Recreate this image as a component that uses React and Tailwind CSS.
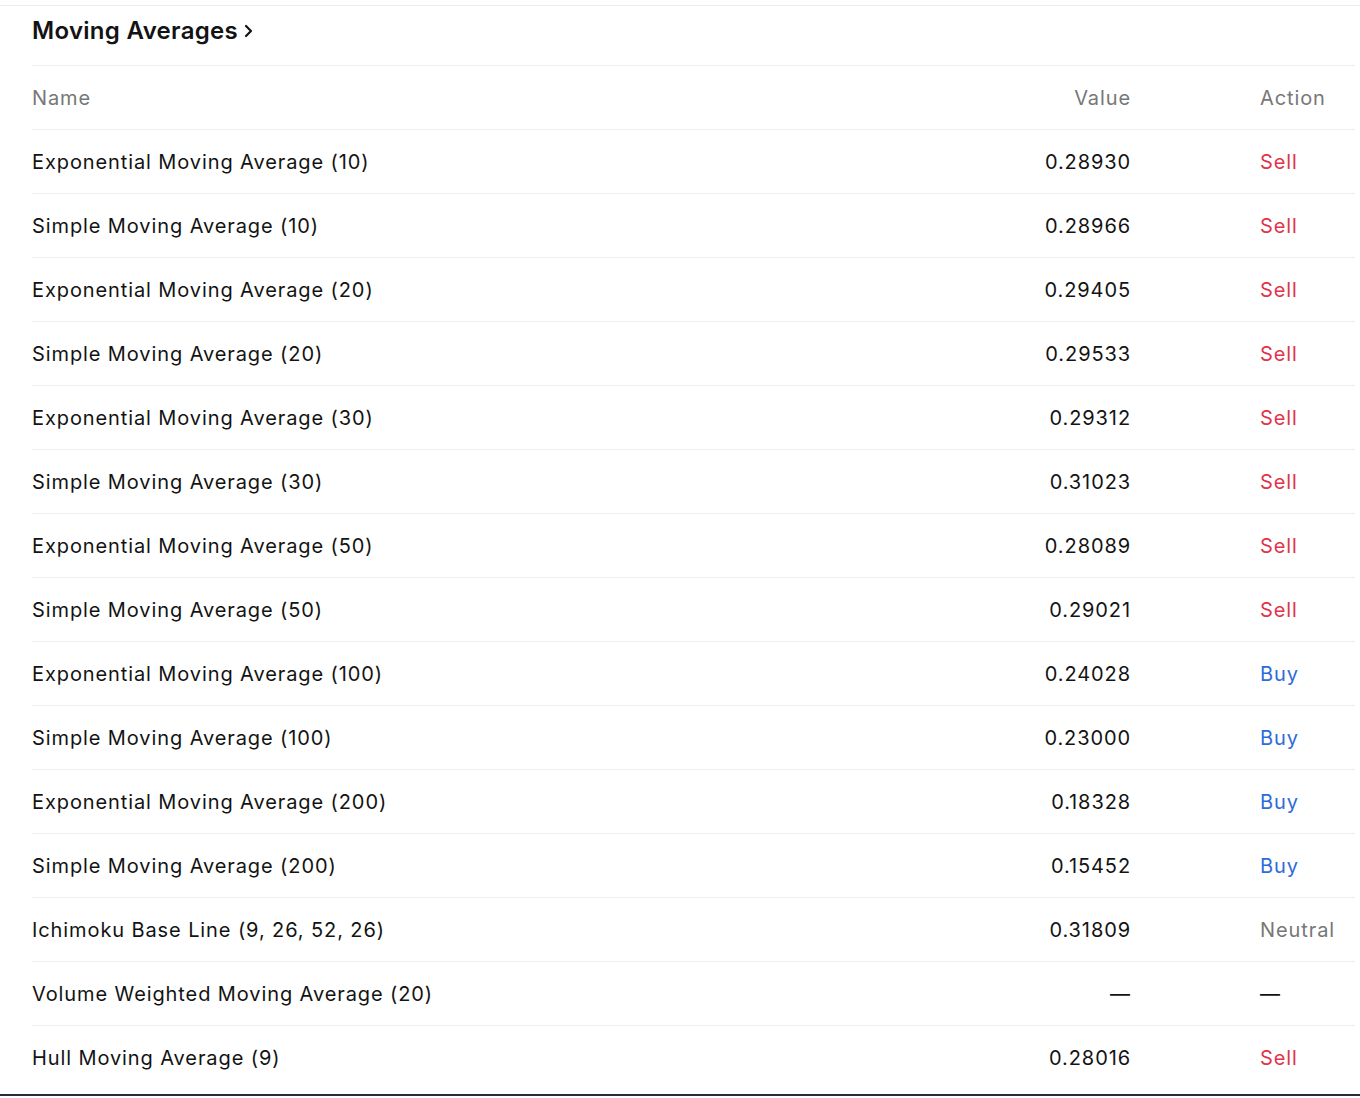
const rows = [
  ["Exponential Moving Average (10)", "0.28930", "Sell"],
  ["Simple Moving Average (10)", "0.28966", "Sell"],
  ["Exponential Moving Average (20)", "0.29405", "Sell"],
  ["Simple Moving Average (20)", "0.29533", "Sell"],
  ["Exponential Moving Average (30)", "0.29312", "Sell"],
  ["Simple Moving Average (30)", "0.31023", "Sell"],
  ["Exponential Moving Average (50)", "0.28089", "Sell"],
  ["Simple Moving Average (50)", "0.29021", "Sell"],
  ["Exponential Moving Average (100)", "0.24028", "Buy"],
  ["Simple Moving Average (100)", "0.23000", "Buy"],
  ["Exponential Moving Average (200)", "0.18328", "Buy"],
  ["Simple Moving Average (200)", "0.15452", "Buy"],
  ["Ichimoku Base Line (9, 26, 52, 26)", "0.31809", "Neutral"],
  ["Volume Weighted Moving Average (20)", "—", "—"],
  ["Hull Moving Average (9)", "0.28016", "Sell"],
];
const color = (a) =>
  a === "Sell" ? "text-[#e0344b]" : a === "Buy" ? "text-[#2e6bdc]" : a === "Neutral" ? "text-[#777]" : "text-[#111]";

export default function App() {
  return (
    <div className="bg-white h-[1098px] overflow-hidden text-[#131313] tracking-[0.9px]" style={{ fontFamily: "Inter, 'Noto Sans', sans-serif" }}>
      <div className="mt-[5px] border-t border-[#ececec]">
        <div className="pl-8 pr-[5px]">
          <div className="h-[59px] pb-[10px] flex items-center gap-1 text-[24px] font-semibold tracking-[0.3px]">
            Moving Averages
            <svg width="14" height="18" viewBox="0 0 14 18" fill="none" stroke="#131313" strokeWidth="2.2" strokeLinecap="round" strokeLinejoin="round"><path d="M4 4l5 5-5 5" /></svg>
          </div>
          <div className="grid grid-cols-[1fr_200px_224px] h-16 items-center border-t border-[#eeeeee] text-[20px] text-[#777]">
            <div>Name</div>
            <div className="text-right">Value</div>
            <div className="pl-[129px]">Action</div>
          </div>
          {rows.map(([n, v, a]) => (
            <div key={n} className="grid grid-cols-[1fr_200px_224px] h-16 items-center border-t border-[#eeeeee] text-[20px]">
              <div>{n}</div>
              <div className="text-right">{v}</div>
              <div className={"pl-[129px] " + color(a)}>{a}</div>
            </div>
          ))}
          <div className="h-[5px]" />
        </div>
        <div className="h-[2px] bg-[#2e2a3a]" />
      </div>
    </div>
  );
}
